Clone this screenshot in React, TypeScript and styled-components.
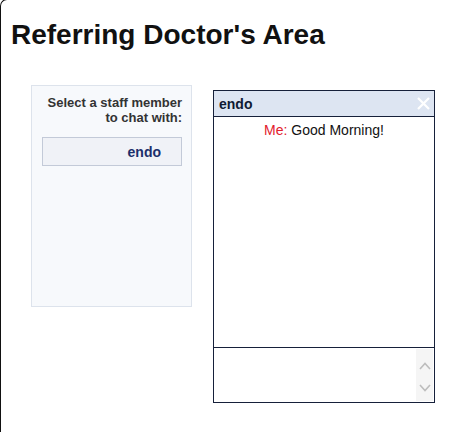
import React from "react";
import styled, { createGlobalStyle } from "styled-components";

const Global = createGlobalStyle`
  html, body { margin: 0; padding: 0; background: #fff; }
  body { font-family: Arial, "Liberation Sans", sans-serif; overflow: hidden; }
`;

const Page = styled.div`
  margin-top: -1px;
  height: 433px;
  border: 1px solid #111;
  border-right: none;
  border-bottom: none;
  border-top-left-radius: 7px;
  box-sizing: border-box;
  padding: 19px 0 0 10px;
`;

const Title = styled.h1`
  margin: 0;
  font-size: 28px;
  font-weight: bold;
  color: #111;
  line-height: 32px;
`;

const Body = styled.div`
  display: flex;
  align-items: flex-start;
  gap: 21px;
  padding: 34px 0 0 20px;
`;

const Sidebar = styled.div`
  width: 161px;
  height: 222px;
  background: #f7f9fc;
  border: 1px solid #dde3ec;
  padding: 9px 9px 0 10px;
  box-sizing: border-box;
  display: flex;
  flex-direction: column;
  align-items: stretch;
`;

const Prompt = styled.div`
  text-align: right;
  font-size: 13px;
  font-weight: bold;
  color: #333;
  line-height: 15px;
`;

const StaffButton = styled.button`
  margin-top: 12px;
  height: 29px;
  background: #f0f2f7;
  border: 1px solid #c3cad8;
  text-align: right;
  padding: 0 20px 0 0;
  font-family: inherit;
  font-size: 14px;
  font-weight: bold;
  color: #1c2f6b;
  cursor: pointer;
`;

const ChatWindow = styled.div`
  margin-top: 5px;
  width: 222px;
  height: 313px;
  border: 1px solid #16203a;
  box-sizing: border-box;
  display: flex;
  flex-direction: column;
`;

const ChatHeader = styled.div`
  height: 25px;
  flex: none;
  background: #dde5f2;
  border-bottom: 1px solid #16203a;
  display: flex;
  align-items: center;
  justify-content: space-between;
  padding: 0 4px 0 5px;
  font-size: 14px;
  font-weight: bold;
  color: #0f1a33;
`;

const CloseX = styled.svg`
  width: 13px;
  height: 13px;
`;

const Messages = styled.div`
  flex: 1;
  border-bottom: 1px solid #16203a;
  padding-top: 5px;
  text-align: center;
  font-size: 14px;
  color: #111;
`;

const Sender = styled.span`
  color: #e2202c;
`;

const InputArea = styled.div`
  height: 54px;
  flex: none;
  display: flex;
`;

const TextBox = styled.div`
  flex: 1;
`;

const ScrollTrack = styled.div`
  width: 17px;
  margin: 1px 1px 1px 0;
  padding-top: 4px;
  box-sizing: border-box;
  background: #f5f5f5;
  display: flex;
  flex-direction: column;
  align-items: center;
  justify-content: center;
  gap: 14px;
`;

const Chevron = styled.svg`
  width: 12px;
  height: 8px;
`;

export default function App() {
  return (
    <>
      <Global />
      <Page>
        <Title>Referring Doctor's Area</Title>
        <Body>
          <Sidebar>
            <Prompt>
              Select a staff member
              <br />
              to chat with:
            </Prompt>
            <StaffButton>endo</StaffButton>
          </Sidebar>
          <ChatWindow>
            <ChatHeader>
              <span>endo</span>
              <CloseX viewBox="0 0 13 13">
                <path d="M1 1 L12 12 M12 1 L1 12" stroke="#fff" strokeWidth="2.2" />
              </CloseX>
            </ChatHeader>
            <Messages>
              <Sender>Me:</Sender> Good Morning!
            </Messages>
            <InputArea>
              <TextBox />
              <ScrollTrack>
                <Chevron viewBox="0 0 12 8">
                  <path d="M1 7 L6 1.5 L11 7" fill="none" stroke="#bdbdbd" strokeWidth="1.6" />
                </Chevron>
                <Chevron viewBox="0 0 12 8">
                  <path d="M1 1 L6 6.5 L11 1" fill="none" stroke="#bdbdbd" strokeWidth="1.6" />
                </Chevron>
              </ScrollTrack>
            </InputArea>
          </ChatWindow>
        </Body>
      </Page>
    </>
  );
}
